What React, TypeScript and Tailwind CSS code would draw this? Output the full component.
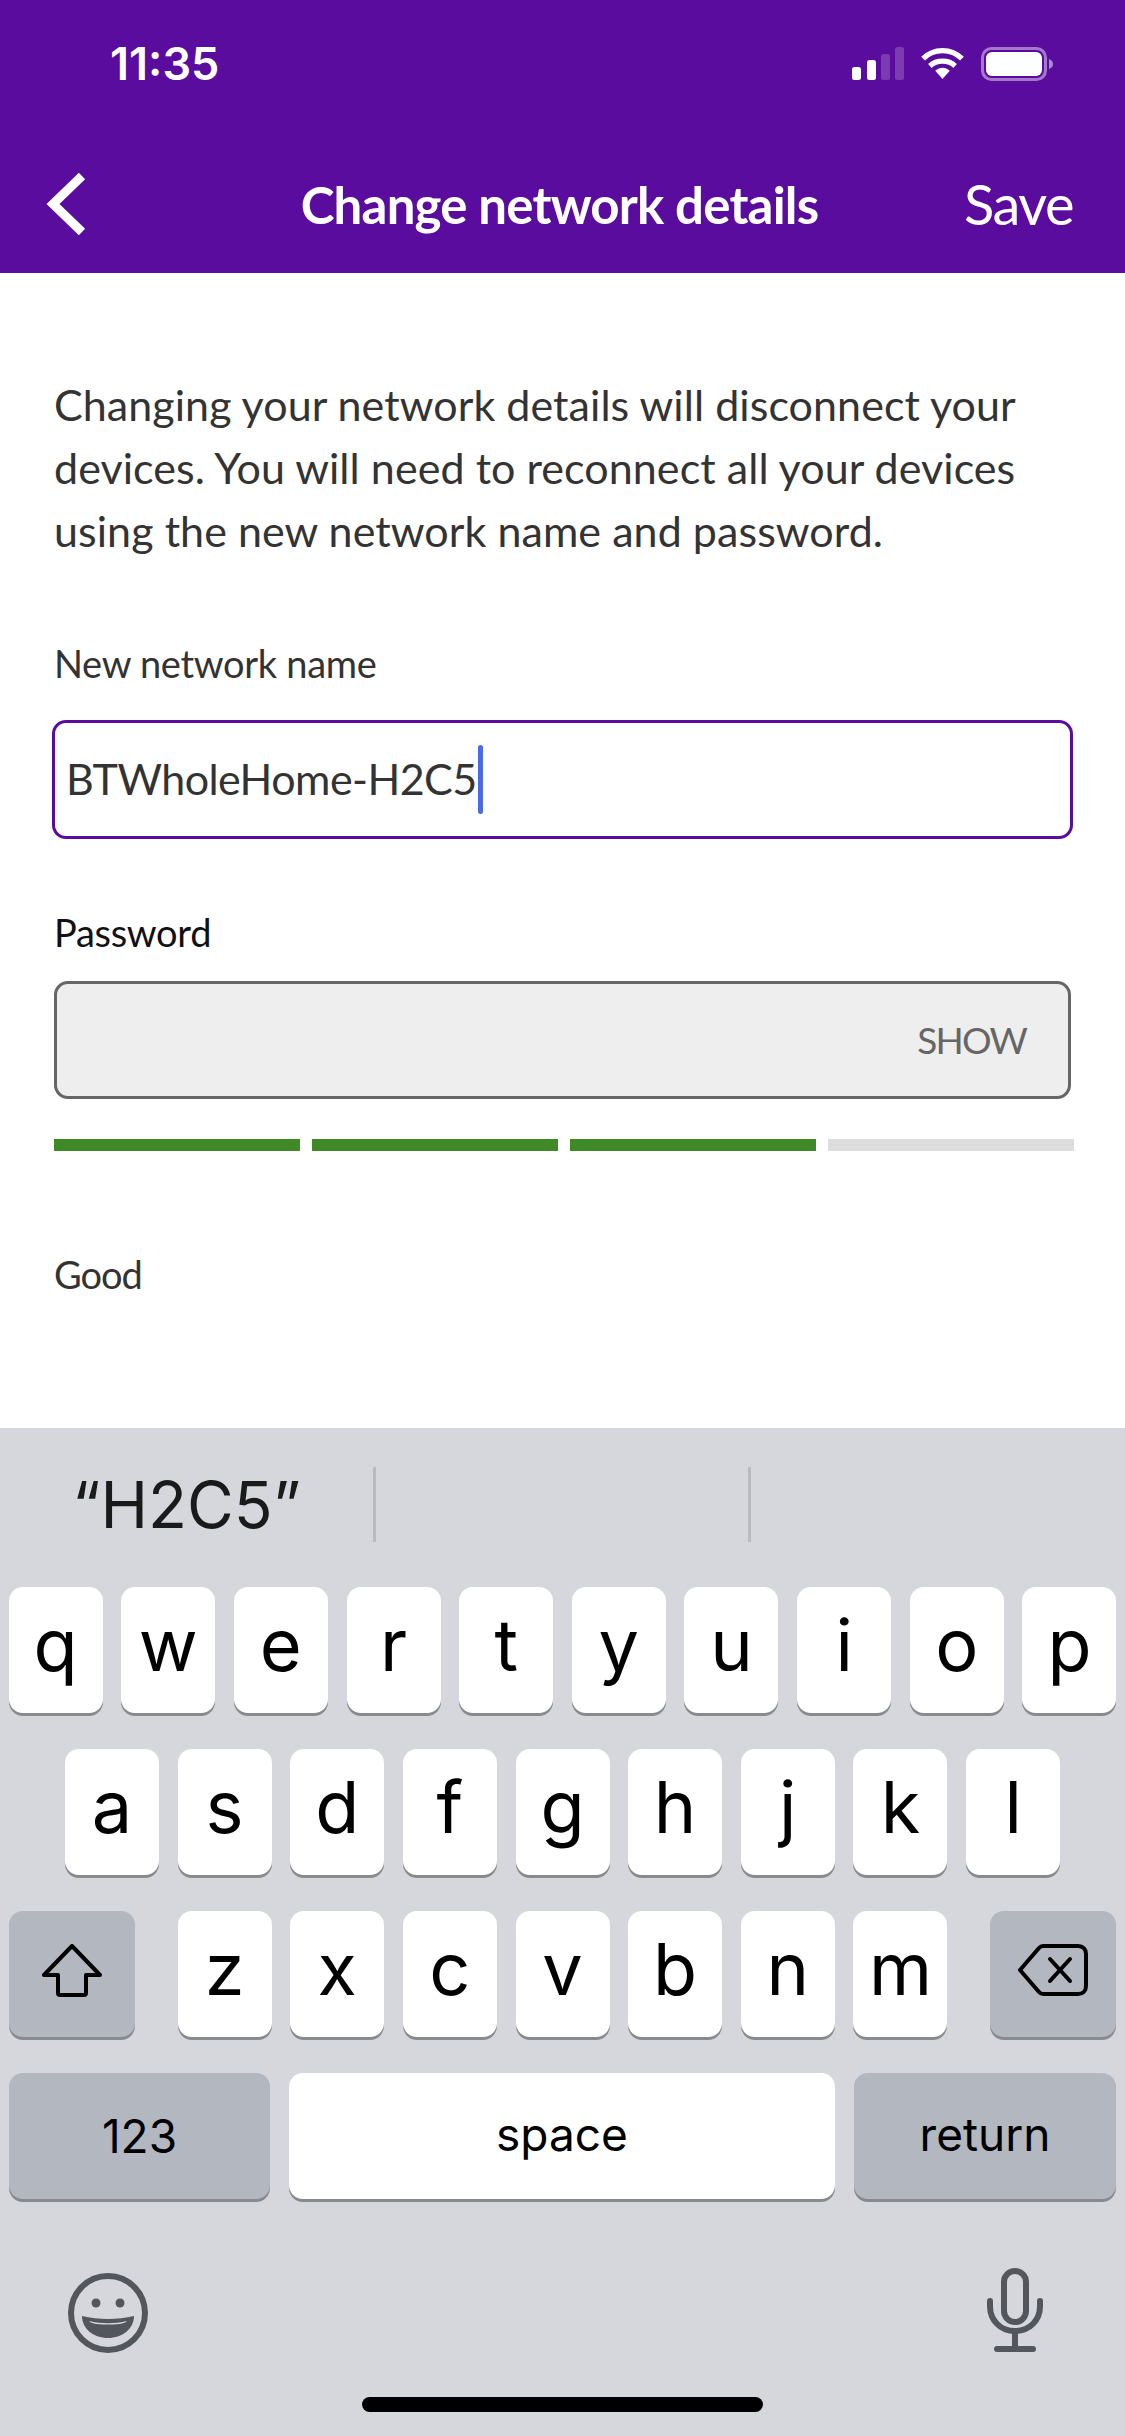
const body = { fontFamily: '"Lato", "Noto Sans", sans-serif' };
const kb = { fontFamily: 'Inter, "Liberation Sans", sans-serif' };

function Key({ c }: { c: string }) {
  return (
    <div className="flex h-[126px] w-[94px] items-center justify-center rounded-[14px] bg-white pb-[10px] text-[72px] leading-none text-black shadow-[0_3px_0_#898a8d]">
      {c}
    </div>
  );
}

function Row({ keys }: { keys: string }) {
  return (
    <div className="flex justify-center gap-[18.67px]">
      {keys.split('').map((k) => (
        <Key key={k} c={k} />
      ))}
    </div>
  );
}

function StatusIcons() {
  return (
    <div className="flex items-center gap-[16px]">
      <svg width="52" height="33" viewBox="0 0 52 33">
        <rect x="0" y="20" width="9" height="13" rx="2.500" fill="#fff" />
        <rect x="15" y="13" width="9" height="20" rx="2.500" fill="#fff" />
        <rect x="29" y="7" width="9" height="26" rx="2.500" fill="#fff" fillOpacity="0.2" />
        <rect x="43" y="0" width="9" height="33" rx="2.500" fill="#fff" fillOpacity="0.2" />
      </svg>
      <svg width="45" height="33" viewBox="0 0 46 34" fill="none">
        <path d="M3 12C14 1 32 1 43 12" stroke="#fff" strokeWidth="5.500" />
        <path d="M10 19.500C17 13 29 13 36 19.500" stroke="#fff" strokeWidth="5.500" />
        <path d="M15.500 24.500C20 20.500 26 20.500 30.500 24.500L23 33Z" fill="#fff" />
      </svg>
      <svg width="72" height="34" viewBox="0 0 72 34" fill="none">
        <rect x="1.500" y="1.500" width="63" height="31" rx="9" stroke="#fff" strokeOpacity="0.45" strokeWidth="3" />
        <rect x="5" y="5" width="56" height="24" rx="6" fill="#fff" />
        <path d="M68 12C71 13 72 15 72 17C72 19 71 21 68 22Z" fill="#fff" fillOpacity="0.5" />
      </svg>
    </div>
  );
}

export default function App() {
  return (
    <div className="flex h-[2436px] w-[1125px] flex-col overflow-hidden bg-white" style={body}>
      <header className="flex h-[273px] shrink-0 flex-col bg-[#5a0c9e] text-white">
        <div className="flex h-[127px] items-center justify-between pl-[110px] pr-[72px]">
          <span className="text-[45px] font-semibold leading-none" style={kb}>11:35</span>
          <StatusIcons />
        </div>
        <div className="mt-[46px] flex items-center pl-[46px] pr-[52px]">
          <div className="flex-1">
            <svg width="40" height="62" viewBox="0 0 40 62" fill="none">
              <path d="M36 3L7 31L36 59" stroke="#fff" strokeWidth="9" strokeLinejoin="miter" />
            </svg>
          </div>
          <h1 className="text-[51px] font-bold leading-none tracking-[-0.8px]">Change network details</h1>
          <div className="flex-1 text-right text-[56px] leading-none tracking-[-1.5px]">Save</div>
        </div>
      </header>

      <main className="flex h-[1155px] shrink-0 flex-col px-[54px] pt-[100px] text-[#333]">
        <p className="text-[43px] leading-[63px] tracking-[0.06px]">
          Changing your network details will disconnect your devices. You will need to reconnect all your devices using the new network name and password.
        </p>
        <label className="mt-[81px] block text-[38px] leading-[40px] tracking-[-0.3px]">New network name</label>
        <div className="mt-[37px] -mx-[2px] flex h-[119px] items-center rounded-[14px] border-[3px] border-[#5a0c9e] pl-[11px] text-[43px] tracking-[-0.55px]">
          <span>BTWholeHome-H2C5</span>
          <span className="ml-[1px] h-[69px] w-[5px] rounded-full bg-[#4a6ae8]" />
        </div>
        <label className="mt-[73px] block text-[38px] leading-[40px] tracking-[-0.3px] text-[#111]">Password</label>
        <div className="mt-[29px] flex h-[118px] items-center justify-end rounded-[14px] border-[3px] border-[#666] bg-[#eee] pr-[42px] text-[37px] tracking-[-1.8px] text-[#666]">
          SHOW
        </div>
        <div className="mt-[40px] -mr-[3px] flex h-[12px] gap-[12px]">
          <div className="flex-1 bg-[#3f8a27]" />
          <div className="flex-1 bg-[#3f8a27]" />
          <div className="flex-1 bg-[#3f8a27]" />
          <div className="flex-1 bg-[#ddd]" />
        </div>
        <div className="mt-[103px] text-[38px] leading-[40px] tracking-[-1px]">Good</div>
      </main>

      <section className="relative flex min-h-0 flex-1 flex-col bg-[#d5d7dc]" style={kb}>
        <div className="flex h-[159px] items-center pb-[6px]">
          <div className="flex h-[75px] w-[373px] items-center justify-center text-[64px] leading-none text-[#1a1a1a]">
            “H2C5”
          </div>
          <div className="h-[75px] w-[3px] bg-[#b9bbc0]" />
          <div className="h-[75px] w-[372px]" />
          <div className="h-[75px] w-[3px] bg-[#b9bbc0]" />
        </div>
        <div className="flex flex-col gap-[36px]">
          <Row keys="qwertyuiop" />
          <Row keys="asdfghjkl" />
          <div className="flex justify-between px-[9px]">
            <div className="flex h-[126px] w-[126px] items-center justify-center rounded-[14px] bg-[#b2b7c0] pb-[6px] shadow-[0_3px_0_#898a8d]">
              <svg width="60" height="54" viewBox="0 0 60 54" fill="none">
                <path d="M30 2L2 31H16V49C16 50.500 17 51 18 51H42C43 51 44 50.500 44 49V31H58Z" stroke="#000" strokeWidth="4" strokeLinejoin="round" />
              </svg>
            </div>
            <div className="flex gap-[18.67px]">
              {'zxcvbnm'.split('').map((k) => (
                <Key key={k} c={k} />
              ))}
            </div>
            <div className="flex h-[126px] w-[126px] items-center justify-center rounded-[14px] bg-[#b2b7c0] pb-[8px] shadow-[0_3px_0_#898a8d]">
              <svg width="70" height="52" viewBox="0 0 70 52" fill="none">
                <path d="M2 26L21 4C22 2.800 23.500 2 25 2H60C65 2 68 5 68 10V42C68 47 65 50 60 50H25C23.500 50 22 49.200 21 48Z" stroke="#000" strokeWidth="4" strokeLinejoin="round" />
                <path d="M32 15L52 37M52 15L32 37" stroke="#000" strokeWidth="4" strokeLinecap="round" />
              </svg>
            </div>
          </div>
          <div className="flex justify-between px-[9px] text-[46px] leading-none text-black">
            <div className="flex h-[126px] w-[261px] items-center justify-center rounded-[14px] bg-[#b2b7c0] shadow-[0_3px_0_#898a8d]">123</div>
            <div className="flex h-[126px] w-[546px] items-center justify-center rounded-[14px] bg-white pb-[4px] shadow-[0_3px_0_#898a8d]">space</div>
            <div className="flex h-[126px] w-[262px] items-center justify-center rounded-[14px] bg-[#b2b7c0] pb-[4px] shadow-[0_3px_0_#898a8d]">return</div>
          </div>
        </div>
        <div className="flex items-start justify-between pl-[68px] pr-[82px] pt-[69px]">
          <svg className="mt-[5px]" width="80" height="80" viewBox="0 0 80 80" fill="none">
            <circle cx="40" cy="40" r="37" stroke="#53565c" strokeWidth="6" />
            <circle cx="28" cy="30" r="4.500" fill="#53565c" />
            <circle cx="52" cy="30" r="4.500" fill="#53565c" />
            <path d="M14 43C30 47 50 47 66 43C66 56 54 65 40 65C26 65 14 56 14 43Z" fill="#53565c" />
            <path d="M21 48C33 51 47 51 59 48C57 50 54 51.500 40 51.500C26 51.500 23 50 21 48Z" fill="#d5d7dc" />
          </svg>
          <svg width="56" height="84" viewBox="0 0 56 84" fill="none" stroke="#53565c" strokeWidth="6" strokeLinecap="round">
            <rect x="17" y="3" width="22" height="51" rx="11" />
            <path d="M3 33V38C3 52 13 63 28 63C43 63 53 52 53 38V33" />
            <path d="M28 63V80" />
            <path d="M10 81H46" />
          </svg>
        </div>
        <div className="absolute bottom-[24px] left-[362px] h-[15px] w-[401px] rounded-full bg-black" />
      </section>
    </div>
  );
}
